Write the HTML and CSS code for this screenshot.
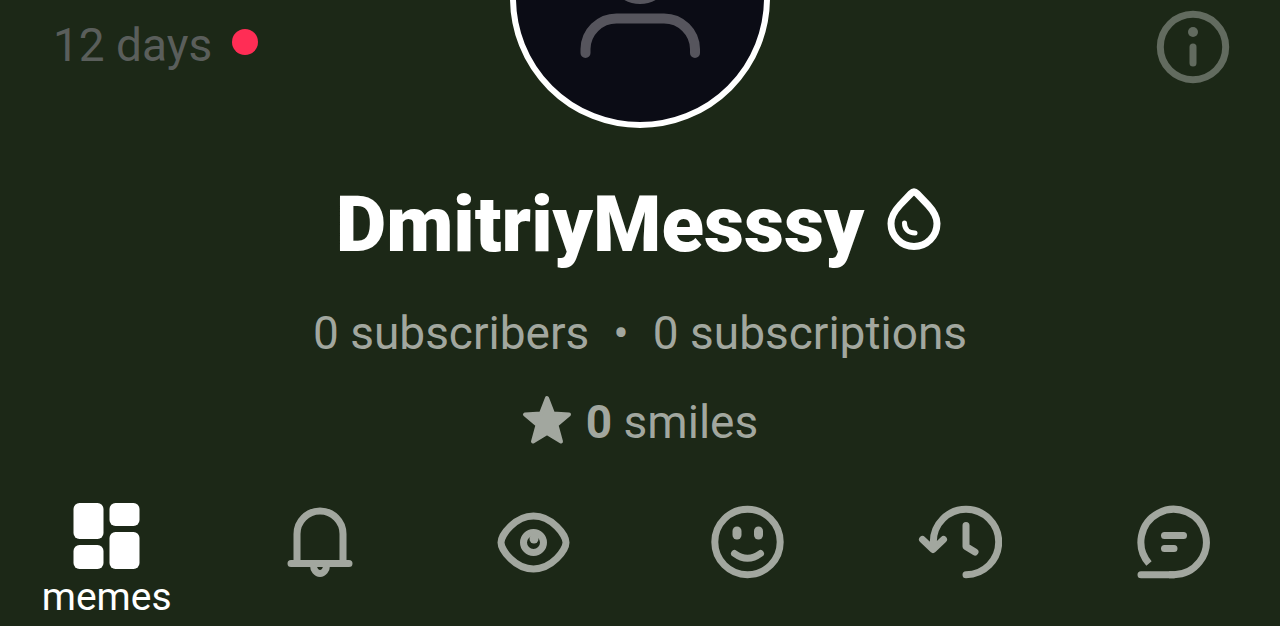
FILE: index.html
```html
<!DOCTYPE html>
<html lang="en">
<head>
    <meta charset="UTF-8">
    <meta name="viewport" content="width=device-width, initial-scale=1.0">
    <title>DmitriyMesssy</title>
    <link rel="stylesheet" href="styles.css">
</head>
<body>
    <header class="header">
        <div class="days">
            <span>12 days</span>
            <span class="days-dot"></span>
        </div>
        <svg class="avatar" viewBox="0 0 260 260" role="img" aria-label="Avatar">
            <circle class="avatar-ring" cx="130" cy="130" r="127"/>
            <circle class="avatar-person" cx="130" cy="104" r="27"/>
            <path class="avatar-person" d="M75.500 185V181A31 31 0 0 1 106.500 150.500H154A31 31 0 0 1 185 181V185"/>
        </svg>
        <button class="info" type="button" aria-label="Info">
            <svg class="icon" viewBox="0 0 80 80">
                <circle cx="40" cy="40" r="32.700"/>
                <circle class="solid" cx="40" cy="25" r="5"/>
                <path d="M40 40V56"/>
            </svg>
        </button>
    </header>

    <main class="profile">
        <h1 class="name">
            <span>DmitriyMesssy</span>
            <svg class="drop" viewBox="0 0 60 70">
                <path d="M27 9.500Q30 6.500 33 9.500L44 21C50 27.500 53 33 53 39.500A23 23 0 0 1 7 39.500C7 33 10 27.500 16 21Z"/>
                <path class="shine" d="M20.500 39C20.500 45 24.500 49 31 49"/>
            </svg>
        </h1>
        <div class="counts">
            <a href="#subscribers">0 subscribers</a>
            <span>•</span>
            <a href="#subscriptions">0 subscriptions</a>
        </div>
        <div class="smiles">
            <svg class="star" viewBox="0 0 50 50">
                <path d="M25 3L31 18.500L47 19.500L34.500 30L39 46.500L25 38L11 46.500L15.500 30L3 19.500L19 18.500Z"/>
            </svg>
            <span><b>0</b> smiles</span>
        </div>
    </main>

    <nav class="tabs">
        <button class="tab active" type="button">
            <svg class="icon" viewBox="0 0 80 80">
                <rect class="solid" x="6.500" y="1" width="30" height="36" rx="6"/>
                <rect class="solid" x="42.500" y="1" width="30" height="23" rx="6"/>
                <rect class="solid" x="6.500" y="43" width="30" height="24" rx="6"/>
                <rect class="solid" x="42.500" y="30" width="30" height="37" rx="6"/>
            </svg>
            <span>memes</span>
        </button>
        <button class="tab" type="button" aria-label="Notifications">
            <svg class="icon" viewBox="0 0 80 80">
                <path d="M17 61V32A23 23 0 0 1 63 32V61M11 61.500H69M33.500 63.500A6.500 8 0 0 0 46.500 63.500"/>
            </svg>
        </button>
        <button class="tab" type="button" aria-label="Views">
            <svg class="icon" viewBox="0 0 80 80">
                <path d="M8 40.500C8 33 22 14 40.500 14S73 33 73 40.500S59 67 40.500 67S8 48 8 40.500Z"/>
                <circle cx="40.500" cy="40.500" r="10"/>
                <circle class="solid" cx="41" cy="37" r="4.500"/>
            </svg>
        </button>
        <button class="tab" type="button" aria-label="Smiles">
            <svg class="icon" viewBox="0 0 80 80">
                <circle cx="40.500" cy="40" r="32.700"/>
                <rect class="solid" x="25.500" y="24.500" width="9" height="13" rx="4.500"/>
                <rect class="solid" x="47" y="24.500" width="9" height="13" rx="4.500"/>
                <path d="M27.500 51.500Q40.500 61 53.500 51.500"/>
            </svg>
        </button>
        <button class="tab" type="button" aria-label="History">
            <svg class="icon wide" viewBox="0 0 84 80">
                <path d="M48 72.700A32.700 32.700 0 1 0 15.300 40V46M4.500 37.500L15 47.500L25.500 37.500M48 23.500V44.500L57 50"/>
            </svg>
        </button>
        <button class="tab" type="button" aria-label="Comments">
            <svg class="icon" viewBox="0 0 80 80">
                <path class="butt" d="M16 61.500A32.700 32.700 0 1 1 41 72.700H36"/>
                <path d="M41 72.700H8M31.500 33.500H50.500M31.500 46.500H41"/>
            </svg>
        </button>
    </nav>
</body>
</html>
```
FILE: styles.css
```css
* {
    margin: 0;
    padding: 0;
    box-sizing: border-box;
}

body {
    background: #1c2817;
    color: #a2a79f;
    font-family: Roboto, sans-serif;
    font-size: 46px;
    line-height: 54px;
    overflow-x: hidden;
}

button {
    background: none;
    border: none;
    color: inherit;
    font: inherit;
    cursor: pointer;
}

a {
    color: inherit;
    text-decoration: none;
}

svg {
    display: block;
    flex-shrink: 0;
}

/* Header */
.header {
    display: grid;
    grid-template-columns: 1fr 260px 1fr;
    grid-template-rows: 128px;
    overflow: hidden;
}

.days {
    display: flex;
    align-items: center;
    align-self: start;
    gap: 20px;
    padding: 18px 0 0 53px;
    color: #5a5e5b;
}

.days-dot {
    width: 26px;
    height: 26px;
    margin-bottom: 6px;
    border-radius: 50%;
    background: #ff2d55;
}

.avatar {
    width: 260px;
    height: 260px;
    align-self: end;
}

.avatar-ring {
    fill: #0b0c15;
    stroke: #fff;
    stroke-width: 6;
}

.avatar-person {
    fill: none;
    stroke: #56555d;
    stroke-width: 10;
    stroke-linecap: round;
}

.info {
    align-self: start;
    justify-self: end;
    padding: 7px 47px 0 0;
    color: #626b5f;
}

/* Icons */
.icon {
    width: 80px;
    height: 80px;
    fill: none;
    stroke: currentColor;
    stroke-width: 7;
    stroke-linecap: round;
    stroke-linejoin: round;
}

.icon.wide {
    width: 84px;
}

.icon .solid {
    fill: currentColor;
    stroke: none;
}

.icon .butt {
    stroke-linecap: butt;
}

/* Profile */
.profile {
    display: flex;
    flex-direction: column;
    align-items: center;
    padding-top: 49px;
}

.name {
    display: flex;
    align-items: center;
    gap: 20px;
    color: #fff;
    font-size: 78px;
    font-weight: 900;
    line-height: 96px;
}

.drop {
    width: 60px;
    height: 70px;
    margin-bottom: 12px;
    fill: none;
    stroke: currentColor;
    stroke-width: 7;
    stroke-linecap: round;
    stroke-linejoin: round;
}

.drop .shine {
    stroke-width: 5;
}

.counts {
    display: flex;
    gap: 24px;
    margin-top: 33px;
}

.smiles {
    display: flex;
    align-items: center;
    gap: 14px;
    margin-top: 35px;
}

.star {
    width: 50px;
    height: 50px;
    margin-bottom: 4px;
    fill: currentColor;
    stroke: currentColor;
    stroke-width: 4;
    stroke-linejoin: round;
}

/* Tabs */
.tabs {
    display: grid;
    grid-template-columns: repeat(6, 1fr);
    margin-top: 53px;
}

.tab {
    display: flex;
    flex-direction: column;
    align-items: center;
    font-size: 39px;
    line-height: 30px;
}

.tab.active {
    color: #fff;
}
```
